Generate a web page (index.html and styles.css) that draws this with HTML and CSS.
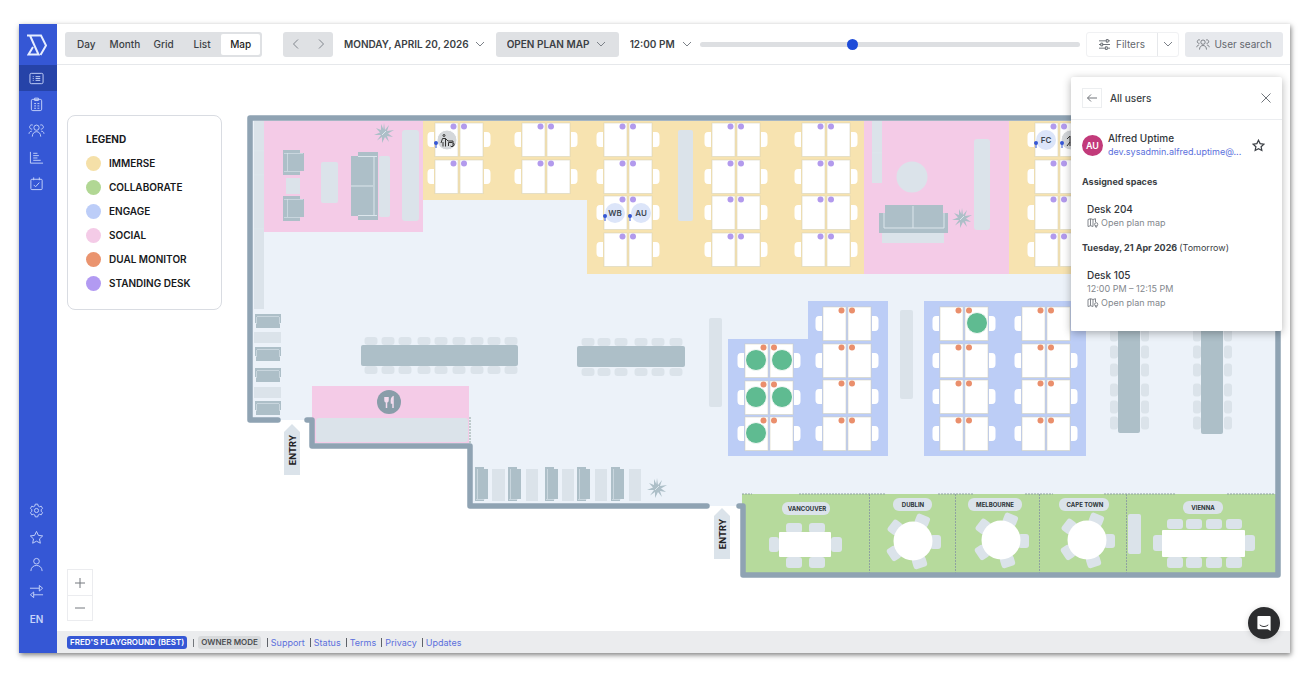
FILE: index.html
```html
<!DOCTYPE html>
<html lang="en">
<head>
<meta charset="utf-8">
<title>Open plan map</title>
<link rel="stylesheet" href="styles.css">
</head>
<body>
<svg class="sprite" aria-hidden="true">
  <symbol id="i-down" viewBox="0 0 10 10"><path d="M1 3l4 4 4-4"/></symbol>
  <symbol id="i-people" viewBox="0 0 18 16"><circle cx="9" cy="5" r="2.8"/><path d="M4.500 14.500c0-7 9-7 9 0M5 2.200a2.300 2.300 0 1 0-.5 4.300M13 2.200a2.300 2.300 0 1 1 .5 4.300M1 11.500c.2-2 1.400-2.700 3-2.800M17 11.500c-.2-2-1.400-2.700-3-2.800"/></symbol>
  <symbol id="i-map" viewBox="0 0 12 10"><path d="M1 1.500l2.500-.8 2.500.8 2.500-.8V4M1 1.500v7l2.500-.8 2.500.8M3.500.8v7M6 1.500v7"/><circle cx="9.200" cy="6.300" r="1.600"/><path d="M8 7.500l1.200 2 1.200-2"/></symbol>
  <symbol id="i-star" viewBox="0 0 16 16"><path d="M8 1.500l2 4.200 4.600.6-3.400 3.200.9 4.600L8 11.900l-4.100 2.200.9-4.600L1.400 6.300 6 5.700z"/></symbol>
</svg>
<div class="app">
  <nav class="side" aria-label="Main">
    <a class="logo" href="#" aria-label="Home"><svg viewBox="0 0 20 22"><path d="M0 1.500H14L19 11.500 13.500 21M3 1.500L11.500 20.500H1.500L6 13"/></svg></a>
    <div class="side-top">
      <a class="on" href="#" aria-label="Schedule"><svg viewBox="0 0 16 16"><rect x="1" y="2.500" width="14" height="11" rx="1.500"/><path d="M4 6h1M4 8h1M4 10h1M7 6h5M7 8h5M7 10h5"/></svg></a>
      <a href="#" aria-label="Bookings"><svg viewBox="0 0 16 16"><rect x="2.500" y="2.500" width="11" height="12" rx="1.500"/><path d="M6 1.200h4v2.500H6zM5.500 7h2M9 7h2M5.500 9.500h2M9 9.500h2M5.500 12h2M9 12h2"/></svg></a>
      <a href="#" aria-label="Users"><svg class="wide" viewBox="0 0 18 16"><use href="#i-people"/></svg></a>
      <a href="#" aria-label="Reports"><svg viewBox="0 0 16 16"><path d="M1.500 2v12H15M4.500 3.500H9M4.500 6h6M4.500 8.500H9M4.500 11h8"/></svg></a>
      <a href="#" aria-label="Check-ins"><svg viewBox="0 0 16 16"><rect x="2" y="3.500" width="12" height="11" rx="1"/><path d="M5 1.500v3M11 1.500v3M5 9.500l2 2L11 7"/></svg></a>
    </div>
    <div class="side-bottom">
      <a href="#" aria-label="Settings"><svg viewBox="0 0 16 16"><circle cx="8" cy="8" r="2.200"/><path d="M6.700 1.200h2.600l.5 2 1.300.8 2-.6 1.300 2.300L13 7.200v1.600l1.400 1.500-1.300 2.300-2-.6-1.300.8-.5 2H6.700l-.5-2-1.300-.8-2 .6-1.300-2.300L3 8.800V7.200L1.600 5.700l1.300-2.300 2 .6 1.300-.8z"/></svg></a>
      <a href="#" aria-label="Favourites"><svg viewBox="0 0 16 16"><use href="#i-star"/></svg></a>
      <a href="#" aria-label="Profile"><svg viewBox="0 0 16 16"><circle cx="8" cy="4.500" r="3"/><path d="M2 15c0-8 12-8 12 0"/></svg></a>
      <a href="#" aria-label="Switch"><svg viewBox="0 0 16 16"><path d="M1 4.500h10M11 1.500l3.500 3L11 7.500zM15 11.500H5M5 8.500l-3.500 3L5 14.500z"/></svg></a>
      <a href="#">EN</a>
    </div>
  </nav>
  <div class="main">
    <header class="bar">
      <div class="tabs">
        <button>Day</button><button>Month</button><button>Grid</button><button>List</button><button class="on" aria-pressed="true">Map</button>
      </div>
      <div class="step">
        <button aria-label="Previous day"><svg viewBox="0 0 10 10"><path d="M7 0.500L2.500 5 7 9.500"/></svg></button>
        <button aria-label="Next day"><svg viewBox="0 0 10 10"><path d="M3 0.500L7.500 5 3 9.500"/></svg></button>
      </div>
      <button class="pick">MONDAY, APRIL 20, 2026 <svg><use href="#i-down"/></svg></button>
      <label class="pick filled"><select aria-label="Floor"><option>OPEN PLAN MAP</option></select><svg><use href="#i-down"/></svg></label>
      <label class="pick"><select aria-label="Time"><option>12:00 PM</option></select><svg><use href="#i-down"/></svg></label>
      <input class="slider" type="range" min="0" max="100" value="40" aria-label="Time of day">
      <div class="filters">
        <button><svg viewBox="0 0 12 12"><path d="M0 2h12M0 6h12M0 10h12"/><path class="knob" d="M8 .5h2v3H8zM2 4.500h2v3H2zM7 8.500h2v3H7z"/></svg>Filters</button>
        <button class="more" aria-label="More filters"><svg viewBox="0 0 10 10"><use href="#i-down"/></svg></button>
      </div>
      <button class="search"><svg viewBox="0 0 18 16"><use href="#i-people"/></svg>User search</button>
    </header>

    <main class="canvas">
      <svg class="plan" viewBox="57 65 1233 566" preserveAspectRatio="xMinYMin meet" role="img" aria-label="Office floor plan">
        <defs>
          <g id="pair">
            <path class="chair" d="M-1 9h-3q-3.500 0-3.500 4v7q0 4 3.500 4h3zM49 9h3q3.500 0 3.500 4v7q0 4-3.500 4h-3z"/>
            <rect class="desk" width="23" height="33.500"/><rect class="desk" x="25" width="23" height="33.500"/>
            <circle cx="18.500" cy="3.500" r="3"/><circle cx="29" cy="3.500" r="3"/>
          </g>
          <g id="two"><use href="#pair"/><use href="#pair" y="37"/></g>
          <g id="three"><use href="#two"/><use href="#pair" y="73"/></g>
          <g id="four"><use href="#three"/><use href="#pair" y="110"/></g>
          <g id="plant"><path d="M0-10L1-3 5-8 3-2 10-3 4 .5 9 4 3 3 5 9 1 4-2 10-2 4-7 7.500-3 2-10 2-4-.5-8-5-3-3-3-9-.7-4z"/><path class="seam" d="M-2 2L2-2"/></g>
          <g id="seat"><rect x="-6.500" y="-4" width="13" height="8" rx="3"/></g>
          <g id="vseat"><rect x="-4" y="-6.500" width="8" height="13" rx="3"/></g>
          <g id="col"><use href="#vseat" y="335"/><use href="#vseat" y="352"/><use href="#vseat" y="370"/><use href="#vseat" y="390"/><use href="#vseat" y="407"/><use href="#vseat" y="423"/></g>
          <g id="row9"><use href="#seat" x="371"/><use href="#seat" x="388"/><use href="#seat" x="405"/><use href="#seat" x="424"/><use href="#seat" x="441"/><use href="#seat" x="459"/><use href="#seat" x="477"/><use href="#seat" x="494"/><use href="#seat" x="511"/></g>
          <g id="row6"><use href="#seat" x="588"/><use href="#seat" x="604"/><use href="#seat" x="621"/><use href="#seat" x="641"/><use href="#seat" x="658"/><use href="#seat" x="676"/></g>
          <g id="sofa"><path class="dark" d="M1 0h26v9h-1v5H2V9H1z"/><path class="seam faint" d="M3 2.500h22M2.500 3v7M25.500 3v7"/></g>
          <g id="booth"><path class="dark" d="M0 0h9v2h4v30H9v2H0z"/><path class="seam faint" d="M2.500 2v30M1 32.500h9"/></g>
          <g id="round">
            <rect x="-6" y="-28" width="14" height="11" rx="3" transform="rotate(22)"/><rect x="-6" y="-28" width="14" height="11" rx="3" transform="rotate(90)"/><rect x="-7" y="-28" width="14" height="11" rx="3" transform="rotate(163)"/><rect x="-7" y="-28" width="14" height="11" rx="3" transform="rotate(237)"/><rect x="-7" y="-28" width="14" height="11" rx="3" transform="rotate(307)"/>
            <circle class="white" r="19.500"/>
          </g>
          <g id="pin"><circle r="2"/><path d="M-.5 1h1v4h-1z"/></g>
        </defs>

        <path class="floor" d="M249 117H1278V506H470V445H313V420H249z"/>
        <path class="social" d="M264 121H423V232H264zM864 121h145v153H864zM312 386H469V443H312z"/>
        <path class="immerse" d="M423 121H864V274H587V200H423zM1009 121h180v153h-180z"/>
        <path class="engage" d="M728 339h80v-38h80V456H728zM924 301h162V456H924z"/>
        <path class="collab" d="M742 494H1276V575H742z"/>

        <g class="light">
          <path d="M254 121h10V309H254zM872 121h10v62h-10zM286 178h14v16h-14zM882 233h62v10h-62zM254 332h27v11h-27zM254 387h27v11h-27z"/>
          <path class="seam" d="M254 151h10M254 175h10M254 229h10M872 153h10"/>
          <rect x="321" y="162" width="17" height="41" rx="2"/><rect x="379" y="156" width="11" height="61" rx="2"/><rect x="402" y="130" width="17" height="91" rx="3"/>
          <rect x="678" y="130" width="15" height="91" rx="2"/><rect x="974" y="139" width="16" height="91" rx="3"/>
          <rect x="709" y="318" width="13" height="89" rx="2"/><rect x="900" y="310" width="13" height="89" rx="2"/>
          <circle cx="912" cy="177" r="15.500"/>
          <rect x="316" y="418" width="152" height="24" rx="3"/>
          <path d="M492 469h13v32h-13zM526 469h12v32h-12zM562 469h12v32h-12zM595 469h12v32h-12zM629 469h12v32h-12z"/>
          <rect x="1128" y="514" width="13" height="40" rx="2"/>
          <use href="#row9" y="341"/><use href="#row9" y="370"/><use href="#row6" y="342"/><use href="#row6" y="372"/>
          <use href="#col" x="1114"/><use href="#col" x="1145"/><use href="#col" x="1197"/><use href="#col" x="1228"/>
        </g>

        <g class="dark">
          <rect x="361" y="345" width="157" height="21" rx="2"/><rect x="577" y="346" width="108" height="21" rx="2"/>
          <rect x="1118" y="120" width="22" height="313" rx="2"/><rect x="1201" y="120" width="22" height="314" rx="2"/>
          <path d="M283 150h17v3h4v18h-4v4h-17zM283 196h17v3h4v18h-4v4h-17zM358 152h20v68h-20v-4h-7v-60h7z"/>
          <path d="M885 205h58v8h5v20h-69v-20h6z"/>
          <path class="seam faint" d="M287.500 153v18M284 153.500h19M284 171.500h16M287.500 199v18M284 199.500h19M284 217.500h16"/>
          <path class="seam" d="M351 186h22M374 157v58M358 156.500h19M358 215.500h19M913 206v22M884 213v15h60v-15"/>
          <use href="#plant" x="384" y="133"/><use href="#plant" x="962" y="218"/><use href="#plant" x="657" y="488"/>
        </g>
        <use href="#sofa" x="254" y="314"/><use href="#sofa" x="254" y="347"/><use href="#sofa" x="254" y="368"/><use href="#sofa" x="254" y="401"/>
        <use href="#booth" x="475" y="467"/><use href="#booth" x="508" y="467"/><use href="#booth" x="545" y="467"/><use href="#booth" x="577" y="467"/><use href="#booth" x="611" y="467"/>

        <g class="purple">
          <use href="#two" x="435" y="123"/><use href="#two" x="522" y="123"/><use href="#four" x="604" y="123"/><use href="#four" x="712" y="123"/><use href="#four" x="802" y="123"/><use href="#four" x="1035" y="123"/>
        </g>
        <g class="orange">
          <use href="#three" x="745" y="344"/><use href="#four" x="823" y="307"/><use href="#four" x="940" y="307"/><use href="#four" x="1022" y="307"/>
        </g>
        <g class="free">
          <circle cx="756" cy="360" r="10.500"/><circle cx="782" cy="360" r="10.500"/><circle cx="756" cy="397" r="10.500"/><circle cx="782" cy="397" r="10.500"/><circle cx="756" cy="433" r="10.500"/><circle cx="977" cy="323" r="10.500"/>
        </g>

        <g class="who">
          <circle class="grey" cx="447" cy="140" r="10"/><circle cx="615" cy="213" r="10"/><circle cx="641" cy="213" r="10"/><circle cx="1046" cy="140" r="10"/><circle class="grey" cx="1071" cy="140" r="10"/>
          <text x="615" y="216">WB</text><text x="641" y="216">AU</text><text x="1046" y="143">FC</text>
          <path class="pet" d="M443 135.500a1 1 0 1 0 2 0 1 1 0 1 0-2 0M441 143l1.500-4.500h3l2.500 2.500M445.500 138.500v8M443 142v4.500M448 141h5v5M448.500 146v-3.500h4M450.500 146a2 2 0 1 0 3-3M1067 139l3-3v10M1067 146l3-4"/>
        </g>
        <g class="pins"><use href="#pin" x="436" y="143"/><use href="#pin" x="605" y="216"/><use href="#pin" x="630" y="216"/><use href="#pin" x="1036" y="143"/><use href="#pin" x="1062" y="143"/></g>

        <circle class="food" cx="389" cy="402" r="12"/>
        <path class="cutlery" d="M385 397v3q0 2 1.500 2t1.500-2v-3M386.500 397v11M393 408v-11q-2 1-1.500 6h1.500"/>

        <path class="glass" d="M869.500 494v79M955.500 494v79M1039.500 494v79M1126.500 494v79M470 417v26M742 494h10M799 494h86M938 494h35M1025 494h28M1104 494h72M1227 494h48"/>
        <path class="wall" d="M278 420H250V118H1278V575H743V506H739M307 420H312V446H470V506H707"/>

        <g class="light">
          <rect x="786" y="523" width="16" height="10" rx="3"/><rect x="809" y="523" width="16" height="10" rx="3"/><rect x="786" y="557" width="16" height="11" rx="3"/><rect x="809" y="557" width="16" height="11" rx="3"/><rect x="769" y="537" width="10" height="15" rx="3"/><rect x="831" y="537" width="11" height="15" rx="3"/>
          <use href="#round" x="913" y="541"/><use href="#round" x="1001" y="540"/><use href="#round" x="1087" y="540"/>
          <rect x="1167" y="519" width="16" height="10" rx="3"/><rect x="1186" y="519" width="16" height="10" rx="3"/><rect x="1206" y="519" width="16" height="10" rx="3"/><rect x="1226" y="519" width="16" height="10" rx="3"/>
          <rect x="1167" y="557" width="16" height="11" rx="3"/><rect x="1186" y="557" width="16" height="11" rx="3"/><rect x="1206" y="557" width="16" height="11" rx="3"/><rect x="1226" y="557" width="16" height="11" rx="3"/>
          <rect x="1153" y="535" width="11" height="16" rx="3"/><rect x="1244" y="535" width="11" height="16" rx="3"/>
          <rect class="white" x="779" y="532" width="52" height="25" rx="1"/><rect class="white" x="1162" y="530" width="83" height="27" rx="1"/>
          <rect x="782" y="502" width="48" height="13" rx="6"/><rect x="893" y="498" width="39" height="13" rx="6"/><rect x="968" y="498" width="54" height="13" rx="6"/><rect x="1059" y="498" width="50" height="13" rx="6"/><rect x="1183" y="501" width="40" height="13" rx="6"/>
          <path d="M284 432l8-8 8 8v43h-16zM714 516l8-8 8 8v43h-16z"/>
        </g>
        <g class="rooms"><text x="807" y="511">VANCOUVER</text><text x="913" y="507">DUBLIN</text><text x="995" y="507">MELBOURNE</text><text x="1085" y="507">CAPE TOWN</text><text x="1203" y="510">VIENNA</text></g>
        <g class="entry"><text transform="translate(296 450) rotate(-90)">ENTRY</text><text transform="translate(726 534) rotate(-90)">ENTRY</text></g>
      </svg>

      <section class="legend">
        <h2>LEGEND</h2>
        <ul>
          <li class="l-immerse">IMMERSE</li><li class="l-collab">COLLABORATE</li><li class="l-engage">ENGAGE</li><li class="l-social">SOCIAL</li><li class="l-dual">DUAL MONITOR</li><li class="l-stand">STANDING DESK</li>
        </ul>
      </section>

      <div class="zoom"><button aria-label="Zoom in"><svg viewBox="0 0 10 10"><path d="M0 5h10M5 0v10"/></svg></button><button aria-label="Zoom out"><svg viewBox="0 0 10 10"><path d="M0 5h10"/></svg></button></div>

      <aside class="panel">
        <div class="panel-head">
          <button class="back" aria-label="Back"><svg viewBox="0 0 10 10"><path d="M10 5H.5M4 1.500L.5 5 4 8.500"/></svg></button>
          <h2>All users</h2>
          <button class="close" aria-label="Close"><svg viewBox="0 0 10 10"><path d="M.5.5l9 9M9.500.5l-9 9"/></svg></button>
        </div>
        <div class="user">
          <span class="avatar">AU</span>
          <div class="id"><p>Alfred Uptime</p><a href="#">dev.sysadmin.alfred.uptime@...</a></div>
          <button class="fav" aria-label="Add to favourites"><svg viewBox="0 0 16 16"><use href="#i-star"/></svg></button>
        </div>
        <h3>Assigned spaces</h3>
        <div class="space"><p>Desk 204</p><small><svg viewBox="0 0 12 10"><use href="#i-map"/></svg>Open plan map</small></div>
        <h3>Tuesday, 21 Apr 2026 <span>(Tomorrow)</span></h3>
        <div class="space"><p>Desk 105</p><small>12:00 PM – 12:15 PM</small><small><svg viewBox="0 0 12 10"><use href="#i-map"/></svg>Open plan map</small></div>
      </aside>
    </main>

    <footer class="foot">
      <span class="tag brand">FRED'S PLAYGROUND (BEST)</span><i></i><span class="tag">OWNER MODE</span>
      <nav class="links" aria-label="Footer"><a href="#">Support</a><a href="#">Status</a><a href="#">Terms</a><a href="#">Privacy</a><a href="#">Updates</a></nav>
    </footer>
    <button class="chat" aria-label="Open chat"><svg viewBox="0 0 16 18"><path class="bubble" d="M2 1h12q1 0 1 1v15l-3-2H2q-1 0-1-1V2q0-1 1-1z"/><path class="smile" d="M3.500 10.500q4.500 3.500 9 0"/></svg></button>
  </div>
</div>
</body>
</html>
```

FILE: styles.css
```css
* { box-sizing: border-box; }
html, body { height: 100%; }
body {
  margin: 0;
  padding: 24px 22px 21px 19px;
  background: #fff;
  color: #3b3f45;
  font: 10px/14px Inter, "Noto Sans", sans-serif;
}
button, select, input { font: inherit; color: inherit; margin: 0; }
button { padding: 0; border: 0; background: none; cursor: pointer; }
a { color: #5b70dc; text-decoration: none; }
h2, h3, p, ul { margin: 0; padding: 0; }
svg { fill: none; stroke: currentColor; }
.sprite { position: absolute; width: 0; height: 0; }

.app {
  display: flex;
  height: 100%;
  min-height: 560px;
  box-shadow: 1px 2px 5px rgba(0, 0, 0, .5);
}

/* Sidebar */
.side {
  flex: none;
  display: flex;
  flex-direction: column;
  width: 38px;
  padding-bottom: 21px;
  background: #3557d5;
}
.side a { display: grid; place-items: center; padding-right: 3px; color: #c6d3fa; font-weight: 600; }
.side svg { width: 15px; height: 15px; }
.side svg.wide { width: 17px; }
.side .logo { height: 41px; color: #e6edff; }
.side .logo svg { width: 20px; height: 22px; stroke-width: 2; }
.side-top { display: grid; grid-auto-rows: 1fr; height: 132px; }
.side-bottom { display: grid; grid-auto-rows: 27px; margin-top: auto; }
.side .on { background: #2643a8; }

/* Top bar */
.main { position: relative; flex: 1; min-width: 0; display: flex; flex-direction: column; background: #fff; }
.bar {
  display: flex;
  align-items: center;
  height: 41px;
  padding: 0 7px 0 8px;
  border-bottom: 1px solid #e6e8eb;
}
.tabs {
  flex: none;
  display: grid;
  grid-template-columns: repeat(5, 1fr);
  width: 197px;
  height: 25px;
  padding: 2px;
  border-radius: 3px;
  background: #dfe1e4;
}
.tabs button { border-radius: 2px; font-weight: 500; }
.tabs .on { background: #fff; color: #222; }
.step { flex: none; display: grid; grid-template-columns: 1fr 1fr; width: 50px; height: 25px; margin-left: 21px; border-radius: 3px; background: #dfe1e4; color: #80858c; }
.step button { display: grid; place-items: center; }
.step svg, .pick svg, .more svg { width: 10px; height: 10px; }
.pick { flex: none; display: flex; align-items: center; gap: 6px; height: 25px; padding: 0 11px; font-weight: 600; }
.pick svg, .more svg { color: #7c8188; }
.pick select { appearance: none; padding: 0; border: 0; background: none; font-weight: 600; }
.filled { padding-right: 13px; border-radius: 3px; background: #dfe1e4; }
.filled + .pick { padding-right: 8px; }
.slider { flex: 1; min-width: 0; height: 14px; appearance: none; background: none; }
.slider::-webkit-slider-runnable-track { height: 5px; border-radius: 3px; background: #dddfe2; }
.slider::-webkit-slider-thumb { appearance: none; width: 11px; height: 11px; margin-top: -3px; border-radius: 50%; background: #1d4bd8; }
.filters { flex: none; display: flex; height: 25px; margin: 0 6px; border: 1px solid #f0f1f3; border-radius: 3px; }
.filters button, .search { display: flex; align-items: center; justify-content: center; gap: 6px; color: #63676d; }
.filters button { width: 70px; }
.filters svg { width: 11px; height: 11px; }
.filters .knob { fill: #fff; }
.filters .more { width: 21px; border-left: 1px solid #e6e8eb; }
.filters .more svg { width: 10px; height: 10px; }
.search { flex: none; width: 98px; height: 25px; border-radius: 3px; background: #e7e9ed; }
.search { gap: 4px; }
.search svg { width: 14px; height: 13px; }

/* Floor plan */
.canvas { position: relative; flex: 1; min-height: 0; }
.plan { display: block; width: 100%; height: 100%; stroke: none; }
.floor { fill: #ecf2f9; }
.social { fill: #f4cbe7; }
.immerse { fill: #f7e3b0; }
.engage { fill: #bccdf6; }
.collab { fill: #b6da9c; }
.light { fill: #dbe3ea; }
.dark { fill: #adbfc8; }
.white { fill: #fff; }
.seam { fill: none; stroke: #dce6ec; }
.faint { stroke-opacity: .6; }
.chair { fill: #fff; }
.desk { fill: #fff; stroke: #cfcdb4; stroke-opacity: .5; }
.purple { fill: #b29aed; }
.orange { fill: #ea8f6c; }
.orange .desk { stroke: #c3c6cf; }
.free { fill: #5fbb91; stroke: #f5f8f6; stroke-width: 1; }
.who circle { fill: #dce5f9; }
.who .grey { fill: #d4d7da; stroke: #fff; }
.who text { fill: #3d4550; font-size: 8px; font-weight: 600; text-anchor: middle; }
.pet { fill: none; stroke: #333; }
.pins { fill: #3557d5; }
.food { fill: #899da9; }
.cutlery { fill: none; stroke: #f4dcee; stroke-width: 1.5; }
.glass { fill: none; stroke: #8fa3a0; stroke-dasharray: 2 1; }
.wall { fill: none; stroke: #8fa3b3; stroke-width: 5.500; stroke-linejoin: round; stroke-linecap: round; }
.rooms { fill: #2c3438; font-size: 6px; font-weight: 700; text-anchor: middle; }
.entry { fill: #1f2225; font-size: 9px; font-weight: 700; text-anchor: middle; }

/* Over the plan */
.legend {
  position: absolute;
  top: 50px;
  left: 10px;
  width: 155px;
  padding: 15px 18px 14px;
  border: 1px solid #d9dce2;
  border-radius: 8px;
  background: #fff;
  color: #17191c;
}
.legend h2 { font-size: 10px; line-height: 16px; }
.legend ul { display: grid; grid-auto-rows: 24px; list-style: none; padding-top: 4px; }
.legend li { display: flex; align-items: center; gap: 8px; font-weight: 600; white-space: nowrap; }
.legend li::before { content: ""; width: 15px; height: 15px; border-radius: 50%; background: var(--dot); }
.l-immerse { --dot: #f5e0a8; }
.l-collab { --dot: #b1d794; }
.l-engage { --dot: #bccdf8; }
.l-social { --dot: #f4cbe7; }
.l-dual { --dot: #ea946f; }
.l-stand { --dot: #b29af2; }

.zoom { position: absolute; left: 10px; bottom: 10px; display: grid; grid-auto-rows: 25px; width: 26px; border: 1px solid #ebecef; background: #fff; color: #74787e; }
.zoom button { display: grid; place-items: center; }
.zoom button + button { border-top: 1px solid #ebecef; }
.zoom svg { width: 10px; height: 10px; }

.panel {
  position: absolute;
  top: 12px;
  right: 8px;
  width: 211px;
  padding-bottom: 21px;
  border-radius: 2px;
  background: #fff;
  box-shadow: 0 2px 8px rgba(0, 0, 0, .3);
}
.panel-head { display: flex; align-items: center; gap: 8px; height: 43px; padding: 0 11px; border-bottom: 1px solid #ebedf0; }
.panel h2 { flex: 1; font-size: 10px; font-weight: 500; }
.back { display: grid; place-items: center; width: 20px; height: 20px; border: 1px solid #eceef0; }
.panel-head svg { display: block; width: 10px; height: 10px; color: #70757b; }
.user { display: flex; align-items: center; gap: 5px; padding: 11px 17px 0 11px; }
.avatar { flex: none; width: 21px; height: 21px; border-radius: 50%; background: #c23a7a; color: #fff; font-size: 9px; font-weight: 600; line-height: 21px; text-align: center; }
.id { flex: 1; min-width: 0; }
.id p, .space p { font-size: 10px; font-weight: 500; color: #33363b; }
.id a { display: block; font-size: 9px; white-space: nowrap; }
.fav svg { display: block; width: 13px; height: 13px; stroke-width: 1.500; }
.panel h3 { padding: 16px 11px 0; font-size: 9px; line-height: 14px; font-weight: 700; }
.space + h3 { padding-top: 11px; }
.panel h3 span { font-weight: 400; }
.space { padding: 13px 16px 0; }
.space small { display: flex; align-items: center; gap: 2px; font-size: 9px; color: #83878d; }
.space small svg { width: 12px; height: 10px; }

/* Footer */
.foot { display: flex; align-items: center; height: 22px; padding: 1px 10px 0; background: #ebecee; white-space: nowrap; }
.tag { padding: 0 3px; border-radius: 3px; background: #d8dadc; color: #4b4e52; font-size: 8px; line-height: 13px; font-weight: 600; }
.brand { background: #3557d5; color: #fff; }
.foot i { width: 1px; height: 8px; margin: 0 4px 0 6px; background: #73777c; }
.links { display: flex; gap: 5px; margin-left: 6px; font-size: 9px; line-height: 9px; }
.links a { padding-left: 3px; border-left: 1px solid #5e6268; }
.chat { position: absolute; right: 10px; bottom: 14px; display: grid; place-items: center; width: 32px; height: 32px; border-radius: 50%; background: #2b2c2e; box-shadow: 0 1px 6px rgba(0, 0, 0, .15); }
.chat svg { width: 16px; height: 17px; stroke: none; }
.bubble { fill: #fff; }
.smile { fill: none; stroke: #2b2c2e; }
```
